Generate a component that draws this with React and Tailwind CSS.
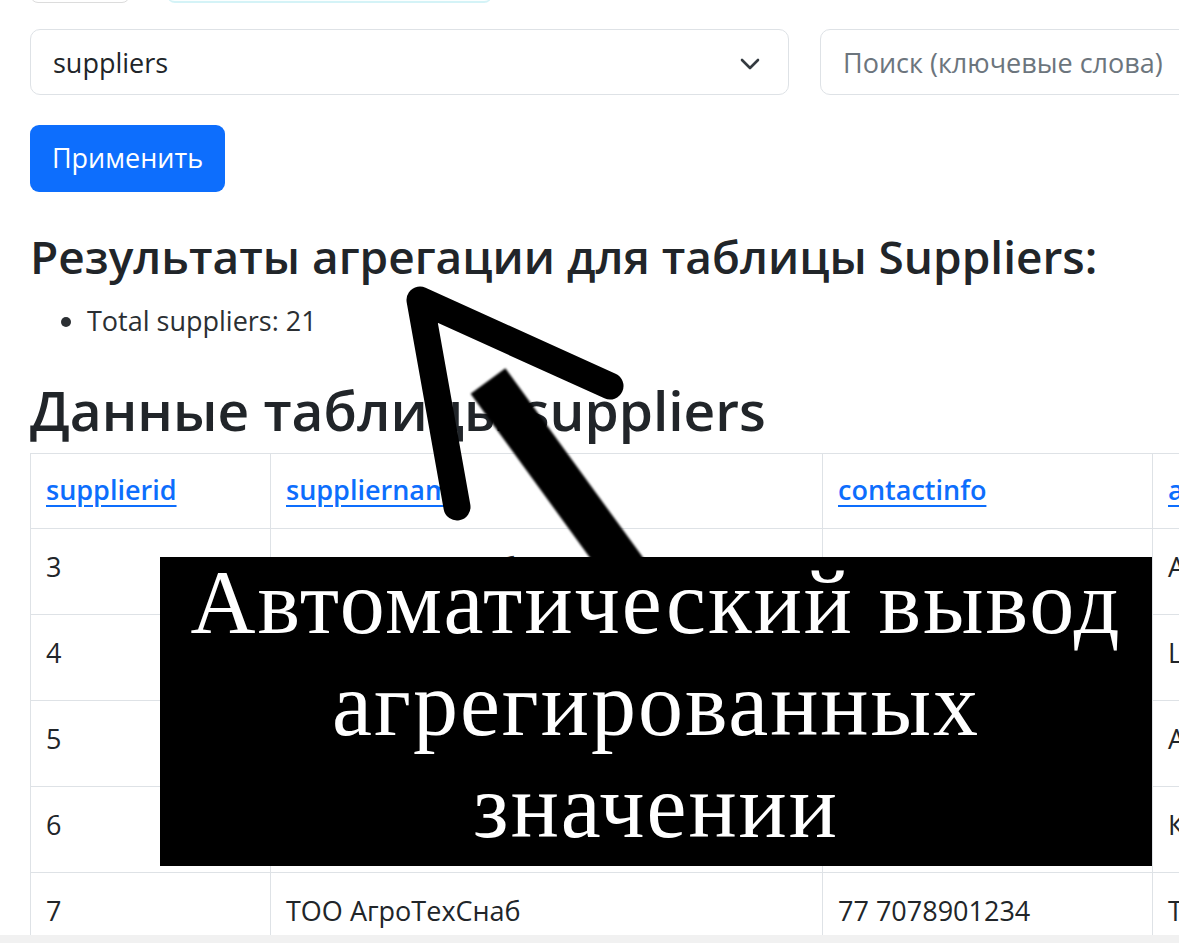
const ROWS = [
  { id: 3, name: 'ТОО АлматыСнаб', contact: '77 7012345678', address: 'Алматы, ул. Абая 10' },
  { id: 4, name: 'ТОО ШымкентТорг', contact: '77 7023456789', address: 'Шымкент, пр. Тауке хана 5' },
  { id: 5, name: 'ТОО АстанаПоставка', contact: '77 7034567890', address: 'Астана, ул. Кенесары 12' },
  { id: 6, name: 'ТОО КарагандаОпт', contact: '77 7045678901', address: 'Караганда, ул. Бухар жырау 7' },
  { id: 7, name: 'ТОО АгроТехСнаб', contact: '77 7078901234', address: 'Тараз, ул. Толе би 3' },
]

const COLUMNS = ['supplierid', 'suppliername', 'contactinfo', 'address']

function Chevron() {
  return (
    <svg width="20" height="12" viewBox="0 0 20 12" fill="none">
      <path d="M2 2l8 8 8-8" stroke="#343a40" strokeWidth="2.6" strokeLinecap="round" strokeLinejoin="round" />
    </svg>
  )
}

function Arrow() {
  return (
    <svg className="absolute left-0 top-0 pointer-events-none" width="1179" height="943" viewBox="0 0 1179 943">
      <defs>
        <filter id="soft" x="-20%" y="-20%" width="140%" height="140%">
          <feGaussianBlur stdDeviation="1.2" />
        </filter>
      </defs>
      {/* shaft */}
      <path d="M488 381 L640 590" stroke="#000" strokeWidth="43" strokeLinecap="butt" filter="url(#soft)" />
      {/* head */}
      <path
        d="M457 507 L420 300 L610 386"
        stroke="#000"
        strokeWidth="27"
        fill="none"
        strokeLinecap="round"
        strokeLinejoin="round"
      />
    </svg>
  )
}

export default function App() {
  return (
    <div className="relative w-[1179px] h-[943px] overflow-hidden bg-white font-['Open_Sans',sans-serif] text-[#212529]">
      <div className="pl-[30px]">
        {/* cut-off controls above */}
        <div className="flex gap-[37px] -mt-[27px]">
          <div className="w-[100px] h-[30px] rounded-b-[8px] border border-[#dcdcdc]" />
          <div className="w-[325px] h-[30px] rounded-b-[8px] bg-[#fbffff] border-b-2 border-[#d4f3f7]" />
        </div>

        {/* filters */}
        <div className="flex gap-[31px] mt-[26px] text-[27px]">
          <div className="w-[759px] h-[66px] shrink-0 rounded-[10px] border border-[#dee2e6] flex items-center justify-between pl-[22px] pr-[28px] pt-[3px]">
            <span>suppliers</span>
            <Chevron />
          </div>
          <div className="w-[759px] h-[66px] shrink-0 rounded-[10px] border border-[#dee2e6] flex items-center pl-[22px] pt-[3px] text-[#6c757d]">
            Поиск (ключевые слова)
          </div>
        </div>

        <button className="mt-[30px] w-[195px] h-[67px] rounded-[9px] bg-[#0d6efd] text-white text-[27px]">
          Применить
        </button>

        <h3 className="mt-[37px] text-[46px] font-semibold leading-[1.2]">
          Результаты агрегации для таблицы Suppliers:
        </h3>
        <ul className="list-disc pl-[57px] mt-[17px] text-[27px] leading-[1.5] text-[#2b2f33]">
          <li>Total suppliers: 21</li>
        </ul>

        <h2 className="mt-[35px] text-[55px] font-semibold leading-[1.2]">Данные таблицы suppliers</h2>

        <table className="mt-[10px] table-fixed border-collapse w-[1400px] text-[27px]">
          <colgroup>
            <col className="w-[240px]" />
            <col className="w-[552px]" />
            <col className="w-[330px]" />
            <col className="w-[278px]" />
          </colgroup>
          <thead>
            <tr className="h-[75px]">
              {COLUMNS.map((c) => (
                <th key={c} className="border border-[#dee2e6] px-[15px] text-left font-semibold">
                  <a className="text-[#0d6efd] underline underline-offset-[5px]">{c}</a>
                </th>
              ))}
            </tr>
          </thead>
          <tbody>
            {ROWS.map((r) => (
              <tr key={r.id} className="h-[86px]">
                <td className="border border-[#dee2e6] px-[15px] pb-[8px]">{r.id}</td>
                <td className="border border-[#dee2e6] px-[15px] pb-[8px]">{r.name}</td>
                <td className="border border-[#dee2e6] px-[15px] pb-[8px]">{r.contact}</td>
                <td className="border border-[#dee2e6] px-[15px] pb-[8px] whitespace-nowrap">{r.address}</td>
              </tr>
            ))}
          </tbody>
        </table>
      </div>

      {/* bottom scroll strip */}
      <div className="absolute left-0 bottom-0 w-full h-[8px] bg-[#f1f1f1]" />

      <Arrow />

      {/* caption overlay */}
      <div className="absolute left-[160px] top-[557px] w-[992px] h-[309px] pb-[14px] bg-black flex flex-col items-center justify-center text-white font-['Liberation_Serif',serif] text-[90px] leading-[102px] tracking-[2px]">
        <div>Автоматический вывод</div>
        <div>агрегированных</div>
        <div>значении</div>
      </div>
    </div>
  )
}
